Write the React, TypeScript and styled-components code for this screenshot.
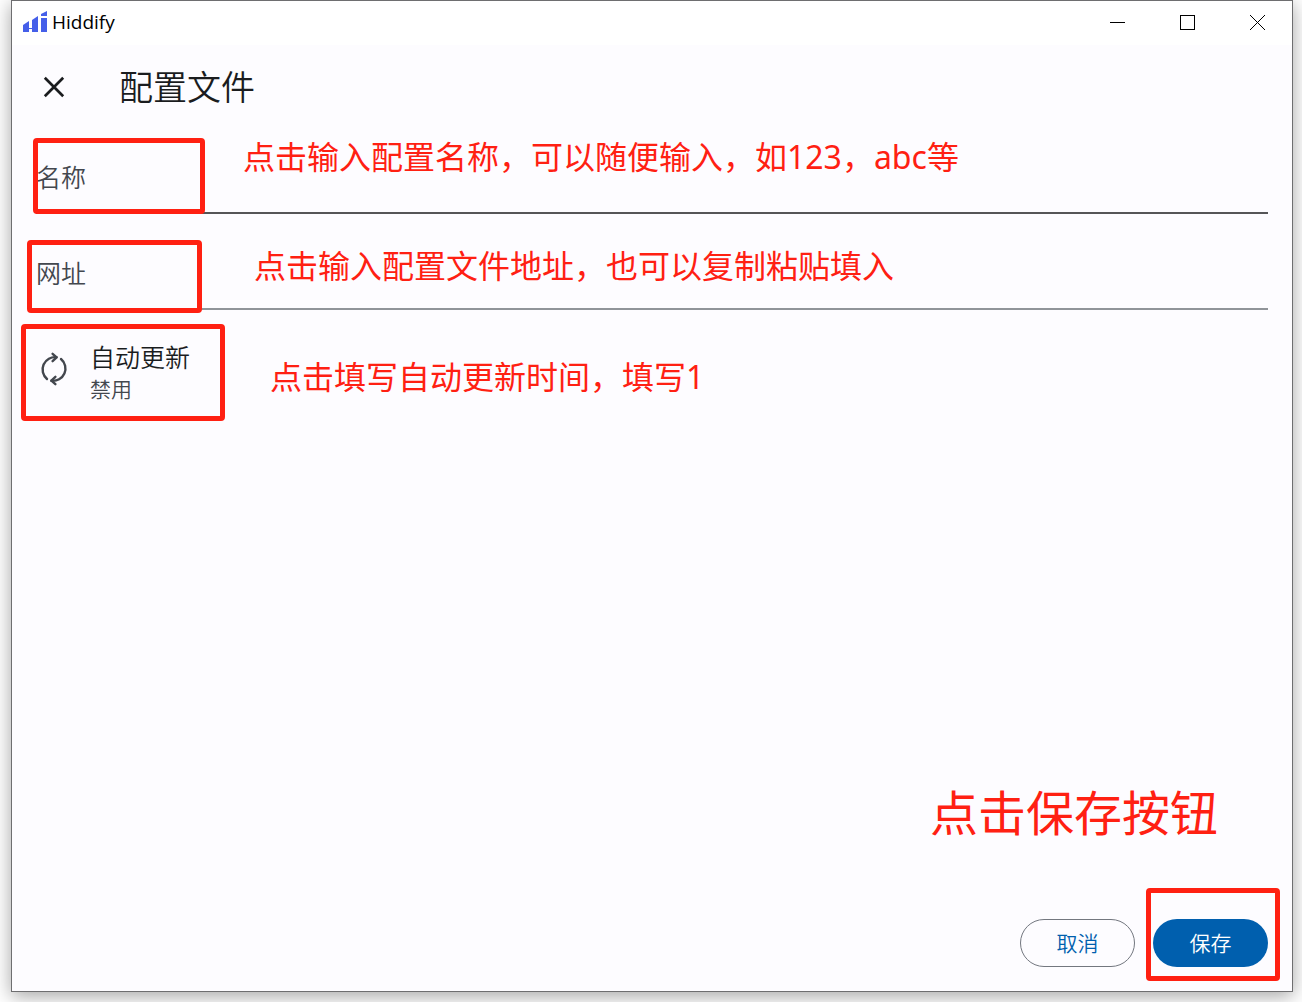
import React from "react";
import styled, { createGlobalStyle } from "styled-components";

const RED = "#ff2012";

const GlobalStyle = createGlobalStyle`
  *, *::before, *::after { box-sizing: border-box; }
  body {
    margin: 0;
    background: #fff;
    font-family: "Noto Sans", "Noto Sans CJK SC", sans-serif;
    color: #1a1c1e;
  }
  button, input { font: inherit; color: inherit; }
`;

const Desktop = styled.div`
  display: flex;
  min-height: 100vh;
  padding: 0 9px 10px 11px;
  overflow: hidden;
`;

const AppWindow = styled.div`
  flex: 1;
  min-width: 0;
  display: flex;
  flex-direction: column;
  border: 1px solid #6e6e70;
  background: #fdfcff;
  box-shadow: 0 4px 18px rgba(0, 0, 0, 0.36);
`;

const TitleBar = styled.header`
  display: flex;
  align-items: center;
  height: 44px;
  padding: 0 0 2px 11px;
  background: #fff;
  color: #000;
`;

const AppName = styled.span`
  flex: 1;
  margin-left: 5px;
  font-family: "Open Sans", "Noto Sans", sans-serif;
  font-size: 19px;
  line-height: 28px;
`;

const PlainButton = styled.button`
  display: flex;
  padding: 0;
  border: 0;
  background: none;
  cursor: pointer;
`;

const WindowControl = styled(PlainButton)`
  align-items: center;
  justify-content: center;
  width: 70px;
  height: 42px;
`;

const AppBar = styled.div`
  display: flex;
  align-items: center;
  gap: 47px;
  height: 86px;
  padding: 0 24px 2px;
`;

const PageTitle = styled.h1`
  margin: 0;
  font-size: 34px;
  line-height: 48px;
  font-weight: 350;
`;

const Form = styled.form`
  flex: 1;
  display: flex;
  flex-direction: column;
  padding: 11px 24px 24px;
`;

const Fields = styled.div`
  display: flex;
  flex-direction: column;
  gap: 24px;
`;

const Anchor = styled.div`
  position: relative;
`;

const Field = styled.label<{ $line: string }>`
  display: grid;
  align-items: center;
  height: 72px;
  border-bottom: 2px solid ${(p) => p.$line};
`;

const FieldName = styled.span`
  grid-area: 1 / 1;
  color: #43474e;
  font-size: 25px;
  line-height: 32px;
  font-weight: 350;
`;

const FieldInput = styled.input`
  grid-area: 1 / 1;
  width: 100%;
  height: 100%;
  padding: 0;
  border: 0;
  outline: 0;
  background: transparent;
  font-size: 25px;
`;

const TileAnchor = styled(Anchor)`
  margin-top: 16px;
`;

const Tile = styled(PlainButton)`
  align-items: flex-start;
  gap: 18px;
  width: 100%;
  padding: 15px 0;
  text-align: left;
  font-weight: 350;
`;

const TileIcon = styled.svg`
  margin-top: 10px;
`;

const TileText = styled.span`
  display: flex;
  flex-direction: column;
  line-height: 32px;
`;

const TileTitle = styled.span`
  font-size: 25px;
`;

const TileValue = styled.span`
  font-size: 21px;
  color: #43474e;
`;

const Footer = styled.footer`
  display: flex;
  justify-content: flex-end;
  gap: 18px;
  margin-top: auto;
`;

const PillButton = styled.button<{ $filled?: boolean }>`
  width: 115px;
  height: 48px;
  padding: 0;
  border: ${(p) => (p.$filled ? "0" : "1px solid #73777f")};
  border-radius: 24px;
  background: ${(p) => (p.$filled ? "#005fae" : "transparent")};
  color: ${(p) => (p.$filled ? "#fff" : "#005fae")};
  font-size: 21px;
  line-height: 32px;
  font-weight: 350;
  cursor: pointer;
`;

const Marker = styled.span<{ $x: number; $y: number; $w: number; $h: number }>`
  position: absolute;
  left: ${(p) => p.$x}px;
  top: ${(p) => p.$y}px;
  width: ${(p) => p.$w}px;
  height: ${(p) => p.$h}px;
  border: 5px solid ${RED};
  border-radius: 4px;
  pointer-events: none;
`;

const Note = styled.span<{ $x: number; $y: number }>`
  position: absolute;
  left: ${(p) => p.$x}px;
  top: ${(p) => p.$y}px;
  color: ${RED};
  font-size: 32px;
  line-height: 48px;
  white-space: nowrap;
  pointer-events: none;
`;

const SaveNote = styled.span`
  position: absolute;
  right: 50px;
  bottom: 118px;
  color: ${RED};
  font-size: 48px;
  line-height: 72px;
  white-space: nowrap;
  pointer-events: none;
`;

const Logo = () => (
  <svg width="24" height="22" viewBox="0 0 24 22" fill="#455fe9" aria-hidden="true">
    <path d="M0 14L6 10V17H9V9L15 5V21H9V18H6V21H0Z" />
    <path d="M18 3L24 0V5H18Z" />
    <path d="M18 7H24V21H18Z" />
  </svg>
);

const SyncIcon = () => (
  <TileIcon
    width="36"
    height="36"
    viewBox="0 0 36 36"
    fill="none"
    stroke="#43474e"
    strokeWidth="2.4"
    strokeLinecap="round"
    strokeLinejoin="round"
    aria-hidden="true"
  >
    <path d="M11 28A12.4 12.4 0 0 1 20.6 6.2" />
    <path d="M16.6 2.8L20.6 6.4L16.6 10.2" />
    <path d="M25 8A12.4 12.4 0 0 1 15.4 29.8" />
    <path d="M19.4 33.2L15.4 29.6L19.4 25.8" />
  </TileIcon>
);

export default function App() {
  return (
    <>
      <GlobalStyle />
      <Desktop>
        <AppWindow>
          <TitleBar>
            <Logo />
            <AppName>Hiddify</AppName>
            <WindowControl aria-label="最小化">
              <svg width="15" height="15" viewBox="0 0 15 15" stroke="#000">
                <path d="M0 7.5H15" />
              </svg>
            </WindowControl>
            <WindowControl aria-label="最大化">
              <svg width="15" height="15" viewBox="0 0 15 15" fill="none" stroke="#000">
                <rect x="0.5" y="0.5" width="14" height="14" />
              </svg>
            </WindowControl>
            <WindowControl aria-label="关闭">
              <svg width="15" height="15" viewBox="0 0 15 15" stroke="#000">
                <path d="M0 0L15 15M15 0L0 15" />
              </svg>
            </WindowControl>
          </TitleBar>
          <AppBar>
            <PlainButton aria-label="返回">
              <svg width="36" height="36" viewBox="0 0 36 36" stroke="#1a1c1e" strokeWidth="2.7">
                <path d="M8.8 8.8L27.2 27.2M27.2 8.8L8.8 27.2" />
              </svg>
            </PlainButton>
            <PageTitle>配置文件</PageTitle>
          </AppBar>
          <Form onSubmit={(e) => e.preventDefault()}>
            <Fields>
              <Anchor>
                <Field $line="#555557">
                  <FieldName>名称</FieldName>
                  <FieldInput type="text" name="name" />
                </Field>
                <Marker $x={-3} $y={-4} $w={172} $h={76} />
                <Note $x={207} $y={-9}>点击输入配置名称，可以随便输入，如123，abc等</Note>
              </Anchor>
              <Anchor>
                <Field $line="#909499">
                  <FieldName>网址</FieldName>
                  <FieldInput type="text" name="url" />
                </Field>
                <Marker $x={-9} $y={2} $w={175} $h={73} />
                <Note $x={218} $y={4}>点击输入配置文件地址，也可以复制粘贴填入</Note>
              </Anchor>
            </Fields>
            <TileAnchor>
              <Tile type="button">
                <SyncIcon />
                <TileText>
                  <TileTitle>自动更新</TileTitle>
                  <TileValue>禁用</TileValue>
                </TileText>
              </Tile>
              <Marker $x={-15} $y={-2} $w={204} $h={97} />
              <Note $x={234} $y={27}>点击填写自动更新时间，填写1</Note>
            </TileAnchor>
            <Footer>
              <PillButton type="button">取消</PillButton>
              <Anchor>
                <PillButton type="submit" $filled>
                  保存
                </PillButton>
                <Marker $x={-7} $y={-31} $w={134} $h={93} />
                <SaveNote>点击保存按钮</SaveNote>
              </Anchor>
            </Footer>
          </Form>
        </AppWindow>
      </Desktop>
    </>
  );
}
